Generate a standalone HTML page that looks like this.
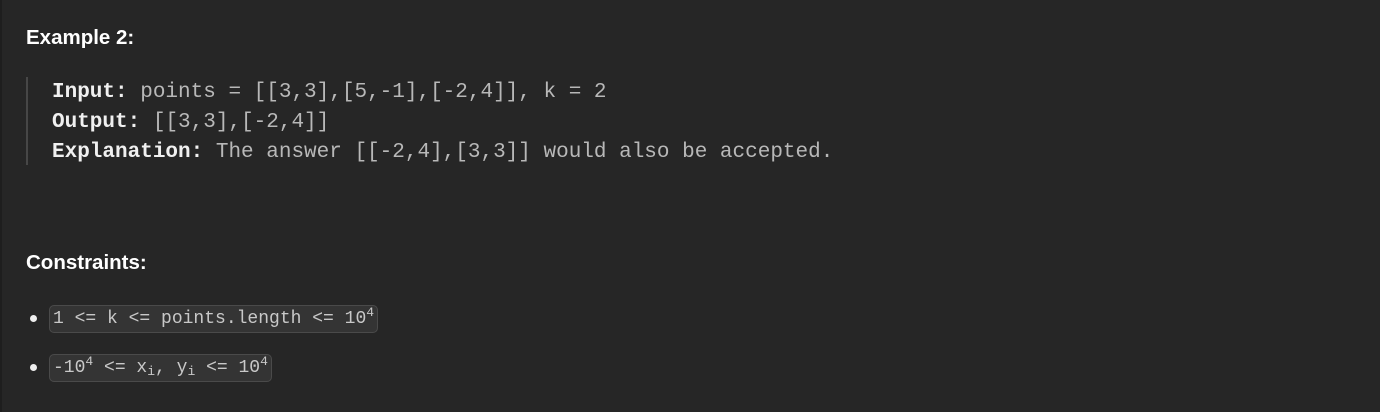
<!DOCTYPE html>
<html><head><style>
body{margin:0;width:1380px;height:412px;background:#262626;overflow:hidden;position:relative;font-family:"Liberation Sans",sans-serif;color:#fff}
.edge{position:absolute;left:0;top:0;width:2px;height:412px;background:#1e1e1e}
h{position:absolute;left:26px;font-weight:bold;font-size:20.5px}
.bq{position:absolute;left:26px;top:77px;height:88px;border-left:2px solid #474747}
.pre{position:absolute;left:52px;top:78px;font-family:"Liberation Mono",monospace;font-size:21px;line-height:30px;color:#b8b8b8;white-space:pre}
.pre b{color:#f0f0f0}
.li{position:absolute;left:30px;font-family:"Liberation Mono",monospace;font-size:18px;color:#c8c8c8}
.dot{position:absolute;left:0;top:10px;width:7px;height:7px;border-radius:50%;background:#eee}
.chip{position:absolute;left:19px;top:0;height:26px;line-height:26px;padding:0 3px;background:#343434;border:1px solid #4a4a4a;border-radius:5px;white-space:pre}
sup{font-size:13px;vertical-align:7px;line-height:0}
sub{font-size:13px;vertical-align:-3px;line-height:0}
</style></head><body>
<div class="edge"></div>
<h style="top:26px">Example 2:</h>
<div class="bq"></div>
<div class="pre"><b>Input:</b> points = [[3,3],[5,-1],[-2,4]], k = 2
<b>Output:</b> [[3,3],[-2,4]]
<b>Explanation:</b> The answer [[-2,4],[3,3]] would also be accepted.</div>
<h style="top:251px">Constraints:</h>
<div class="li" style="top:305px"><div class="dot"></div><div class="chip">1 &lt;= k &lt;= points.length &lt;= 10<sup>4</sup></div></div>
<div class="li" style="top:354px"><div class="dot"></div><div class="chip">-10<sup>4</sup> &lt;= x<sub>i</sub>, y<sub>i</sub> &lt;= 10<sup>4</sup></div></div>
</body></html>
